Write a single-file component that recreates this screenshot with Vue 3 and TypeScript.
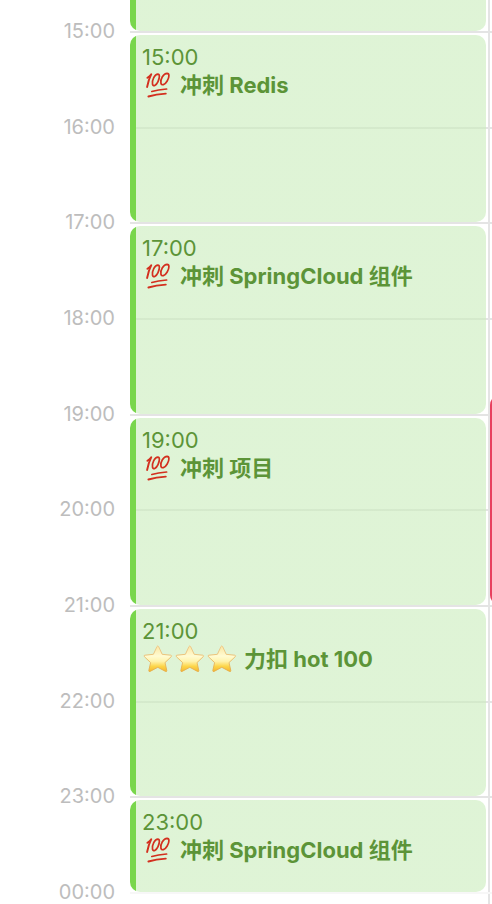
<script setup lang="ts">
interface CalendarEvent {
  slot: string
  time?: string
  icon?: 'hundred' | 'star'
  iconCount?: number
  title?: string
}

const hours: string[] = ['15:00', '16:00', '17:00', '18:00', '19:00', '20:00', '21:00', '22:00', '23:00', '00:00']

const events: CalendarEvent[] = [
  { slot: 'slot-earlier' },
  { slot: 'slot-15', time: '15:00', icon: 'hundred', iconCount: 1, title: '冲刺 Redis' },
  { slot: 'slot-17', time: '17:00', icon: 'hundred', iconCount: 1, title: '冲刺 SpringCloud 组件' },
  { slot: 'slot-19', time: '19:00', icon: 'hundred', iconCount: 1, title: '冲刺 项目' },
  { slot: 'slot-21', time: '21:00', icon: 'star', iconCount: 3, title: '力扣 hot 100' },
  { slot: 'slot-23', time: '23:00', icon: 'hundred', iconCount: 1, title: '冲刺 SpringCloud 组件' },
]
</script>

<template>
  <main class="board">
    <svg class="defs" width="0" height="0" aria-hidden="true">
      <defs>
        <linearGradient id="star-fill" x1="0" y1="0" x2="0" y2="1">
          <stop offset="0" stop-color="#fbe6a0" />
          <stop offset="0.4" stop-color="#fffbd2" />
          <stop offset="0.6" stop-color="#fff3ac" />
          <stop offset="0.8" stop-color="#fcd548" />
          <stop offset="1" stop-color="#f5b630" />
        </linearGradient>
        <linearGradient id="star-edge" x1="0" y1="0" x2="0" y2="1">
          <stop offset="0" stop-color="#ecc78a" />
          <stop offset="1" stop-color="#e5ab48" />
        </linearGradient>
      </defs>
    </svg>

    <div class="divider"></div>
    <template v-for="(hour, i) in hours" :key="hour">
      <time class="hour" :style="{ gridRow: i + 2 }">{{ hour }}</time>
      <div class="line" :class="{ faint: hour === '00:00' }" :style="{ gridRow: i + 2 }"></div>
    </template>

    <article v-for="event in events" :key="event.slot" class="event" :class="event.slot">
      <template v-if="event.time">
        <time class="start">{{ event.time }}</time>
        <h2 class="title">
          <template v-for="n in event.iconCount" :key="n">
            <svg v-if="event.icon === 'hundred'" class="emoji" viewBox="0 0 32 28" aria-hidden="true">
              <g fill="none" stroke="#d3301f" stroke-linecap="round" stroke-linejoin="round">
                <path stroke-width="1.9" d="M5.4 6.8Q7.8 5.4 9.3 3.2Q6.4 9 5.1 16" />
                <path stroke-width="1.7" d="M15.9 3.1C12.6 3.2 9.9 9.2 10.5 13C11 16 14.2 14.6 16 10.6C17.9 6.4 17.8 3.1 15.9 3.1Z" />
                <path stroke-width="1.7" d="M25.1 2.3C21.4 2.4 18.2 8.3 18.9 12C19.4 15 22.9 14 25.2 10C27.5 6 27.5 2.4 25.1 2.3Z" />
                <path stroke-width="1.7" d="M9.8 20.5Q16 18.6 24.6 18" />
                <path stroke-width="1.9" d="M6.4 25.5Q14 23 23.8 22.6" />
              </g>
            </svg>
            <svg v-else class="emoji" viewBox="0 0 32 28" aria-hidden="true">
              <path
                d="M15 1.5Q15.8 0.2 16.6 1.5L20.2 9.3L28.8 10.2Q30.2 10.6 29.2 11.7L23 17.6L24.8 25.5Q24.9 27 23.5 26.4L15.8 22.3L8.1 26.4Q6.7 27 6.8 25.5L8.6 17.6L2.4 11.7Q1.4 10.6 2.8 10.2L11.4 9.3Z"
                fill="url(#star-fill)"
                stroke="url(#star-edge)"
                stroke-width="0.9"
                stroke-linejoin="round"
              />
            </svg>
          </template>
          <span class="name">{{ event.title }}</span>
        </h2>
      </template>
    </article>

    <article class="event next-day"></article>
  </main>
</template>

<style>
body {
  margin: 0;
  background: #fff;
}
</style>

<style scoped>
.board {
  display: grid;
  grid-template-columns: 130px minmax(0, 1fr) 2px;
  grid-template-rows: 31px repeat(3, 96px 95px 96px) minmax(12px, 1fr);
  min-height: 100vh;
  overflow: hidden;
  font-family: Inter, "Noto Sans CJK SC", sans-serif;
}

.defs {
  position: absolute;
}

.divider {
  grid-column: 2;
  grid-row: 1 / -1;
  border-right: 2px solid #e4e4e4;
}

.hour {
  grid-column: 1;
  height: 24px;
  margin-top: -12px;
  padding-right: 15px;
  text-align: right;
  font-size: 20px;
  line-height: 24px;
  color: #bdbdbd;
}

.line {
  grid-column: 2 / -1;
  height: 2px;
  background: #e4e4e4;
}

.line.faint {
  background: #f7f7f7;
}

.event {
  grid-column: 2;
  box-sizing: border-box;
  margin: 4px 4px 0 0;
  padding: 8px 6px 0 12px;
  border-radius: 10px;
  background: linear-gradient(to right, #79d64c 6px, rgba(203, 237, 189, 0.62) 6px);
  color: #5c9438;
  overflow: hidden;
}

.slot-earlier {
  grid-row: 1;
  margin-top: 0;
  border-radius: 0 0 10px 10px;
}

.slot-15 {
  grid-row: 2 / 4;
}

.slot-17 {
  grid-row: 4 / 6;
}

.slot-19 {
  grid-row: 6 / 8;
}

.slot-21 {
  grid-row: 8 / 10;
}

.slot-23 {
  grid-row: 10;
}

.next-day {
  grid-column: 3;
  grid-row: 5 / 8;
  width: 120px;
  margin-top: 77px;
  background: #e8405e;
}

.start {
  display: block;
  font-size: 22px;
  line-height: 28px;
}

.title {
  display: flex;
  margin: 0;
  font-size: 22px;
  font-weight: 700;
  line-height: 28px;
  white-space: nowrap;
}

.emoji {
  flex: none;
  width: 32px;
  height: 28px;
}

.name {
  margin-left: 6px;
}
</style>
